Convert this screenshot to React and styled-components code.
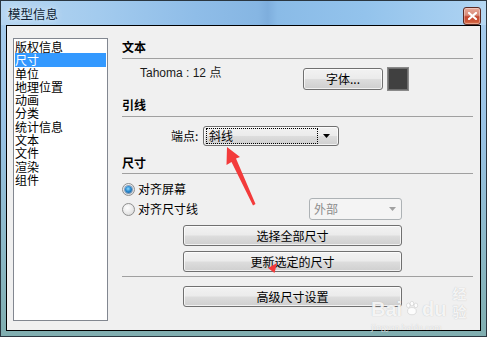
import React from "react";
import styled, { createGlobalStyle, css } from "styled-components";

const Global = createGlobalStyle`
  html, body { margin: 0; padding: 0; }
  body { width: 487px; height: 337px; overflow: hidden; background: #fff; }
  * { box-sizing: border-box; }
`;

const CJK = `"Noto Sans CJK SC", "Noto Sans", sans-serif`;

const Window = styled.div`
  position: relative;
  width: 487px;
  height: 337px;
  border: 1px solid #2a3640;
  display: flex;
  flex-direction: column;
  background: linear-gradient(180deg, #a9cdee 0%, #98c2e4 40%, #8bb8c6 75%, #80aeb0 100%);
  font-family: ${CJK};
  font-size: 12px;
  color: #000;
`;

const TitleBar = styled.div`
  height: 24px;
  flex: none;
  display: flex;
  align-items: center;
  justify-content: space-between;
  padding: 0 5px 0 7px;
  background: linear-gradient(90deg, #b5d5f1 0%, #a3cbee 20%, #8fbde8 40%, #86b6e3 53%, #7eaedd 55%, #8abbe7 57%, #93c3ec 75%, #a9d0f1 95%, #b7d8f2 100%);
`;

const Title = styled.span`
  font-size: 12.5px;
  line-height: 14px;
  color: #0f1e33;
  text-shadow: 0 0 6px rgba(255, 255, 255, 0.9);
  margin-top: 1px;
`;

const CloseButton = styled.div`
  width: 18px;
  height: 18px;
  margin-top: 5px;
  border: 1px solid #5b2a24;
  border-radius: 3px;
  background: linear-gradient(180deg, #e9a999 0%, #d88b79 45%, #c4452f 55%, #cd5a3a 85%, #e07b55 100%);
  display: flex;
  align-items: center;
  justify-content: center;
  box-shadow: inset 0 0 0 1px rgba(255, 255, 255, 0.35);
`;

const Client = styled.div`
  flex: 1;
  margin: 0 5px 5px 5px;
  border: 1px solid #000;
  background: #f0f0f0;
  display: flex;
  align-items: flex-start;
  padding: 12px 7px 0 6px;
  gap: 14px;
`;

const ListBox = styled.div`
  width: 95px;
  height: 283px;
  flex: none;
  background: #fff;
  border: 1px solid #828790;
  padding: 1px 1px 0 1px;
`;

const ListItem = styled.div`
  height: 13.3px;
  line-height: 13.3px;
  padding-left: 0;
  white-space: nowrap;
  ${(p) =>
    p.$selected &&
    css`
      background: #3399ff;
      color: #fff;
    `}
`;

const Panel = styled.div`
  flex: 1;
  display: flex;
  flex-direction: column;
`;

const Heading = styled.div`
  font-weight: bold;
  line-height: 14px;
  height: 14px;
  margin-top: ${(p) => p.$mt}px;
`;

const Rule = styled.div`
  height: 1px;
  background: #a0a0a0;
  margin-top: ${(p) => p.$mt}px;
`;

const Row = styled.div`
  display: flex;
  align-items: center;
  margin-top: ${(p) => p.$mt}px;
  padding-left: ${(p) => p.$pl || 0}px;
  height: ${(p) => p.$h}px;
`;

const FontLabel = styled.span`
  font-family: "Liberation Sans", ${CJK};
  font-size: 12px;
  line-height: 14px;
  width: 163px;
  align-self: flex-start;
  margin-top: -1px;
  color: #1a1a1a;
`;

const buttonSkin = css`
  border: 1px solid #707070;
  border-radius: 3px;
  background: linear-gradient(180deg, #f2f2f2 0%, #ebebeb 48%, #dddddd 52%, #cfcfcf 100%);
  box-shadow: inset 0 0 0 1px rgba(255, 255, 255, 0.7);
`;

const Button = styled.div`
  ${buttonSkin};
  width: ${(p) => p.$w}px;
  height: ${(p) => p.$h || 21}px;
  margin-left: ${(p) => p.$ml || 0}px;
  margin-top: ${(p) => p.$mt || 0}px;
  display: flex;
  align-items: center;
  justify-content: center;
  line-height: 14px;
  flex: none;
`;

const Swatch = styled.div`
  width: 22px;
  height: 24px;
  margin-left: 4px;
  border: 1px solid #8a8a8a;
  background: #404040;
  box-shadow: inset 0 0 0 1px #6e6e6e;
`;

const Label = styled.span`
  width: ${(p) => p.$w}px;
  line-height: 14px;
`;

const Combo = styled.div`
  ${buttonSkin};
  width: 136px;
  height: 20px;
  display: flex;
  align-items: center;
  padding: 0 3px 0 2px;
`;

const FocusBox = styled.div`
  width: 112px;
  height: 16px;
  border: 1px dotted #000;
  line-height: 14px;
  padding-left: 2px;
`;

const ArrowCell = styled.div`
  flex: 1;
  display: flex;
  justify-content: center;
  align-items: center;
`;

const DisabledCombo = styled.div`
  width: 93px;
  height: 22px;
  margin-left: auto;
  margin-right: 71px;
  border: 1px solid #adb2b5;
  border-radius: 3px;
  background: #f4f4f4;
  color: #8d8d8d;
  display: flex;
  align-items: center;
  justify-content: space-between;
  padding: 0 5px 0 4px;
  line-height: 14px;
`;

const Radio = styled.span`
  width: 13px;
  height: 13px;
  border-radius: 50%;
  border: 1px solid #8e8f8f;
  background: radial-gradient(circle at 40% 35%, #ffffff 0%, #e6e6e6 60%, #cfcfcf 100%);
  display: inline-flex;
  align-items: center;
  justify-content: center;
  flex: none;
  &::after {
    content: "";
    display: ${(p) => (p.$checked ? "block" : "none")};
    width: 7px;
    height: 7px;
    border-radius: 50%;
    background: radial-gradient(circle at 45% 40%, #8fdcff 0%, #2a8ad0 45%, #0f4f86 100%);
    box-shadow: 0 0 0 1px rgba(30, 80, 140, 0.5);
  }
`;

const RadioText = styled.span`
  margin-left: 3px;
  line-height: 14px;
`;

const Overlay = styled.svg`
  position: absolute;
  left: -1px;
  top: -1px;
  pointer-events: none;
`;

const Watermark = styled.div`
  position: absolute;
  left: 370px;
  top: 283px;
  width: 100px;
  pointer-events: none;
  color: rgba(255, 255, 255, 0.85);
  text-shadow: 0 0 1px rgba(150, 150, 150, 0.6);
  display: flex;
  flex-direction: column;
  align-items: flex-start;
`;

const WmMain = styled.div`
  display: flex;
  align-items: flex-end;
  font-family: "Liberation Sans", sans-serif;
  font-weight: bold;
  font-size: 20px;
  line-height: 22px;
  gap: 2px;
`;

const WmCn = styled.span`
  font-family: ${CJK};
  font-size: 14px;
  line-height: 18px;
  font-weight: bold;
  margin-left: 4px;
`;

const WmSub = styled.div`
  font-family: "Liberation Serif", serif;
  font-size: 9px;
  line-height: 11px;
  margin-top: 2px;
  letter-spacing: 0.2px;
`;

const items = ["版权信息", "尺寸", "单位", "地理位置", "动画", "分类", "统计信息", "文本", "文件", "渲染", "组件"];

export default function App() {
  return (
    <>
      <Global />
      <Window>
        <TitleBar>
          <Title>模型信息</Title>
          <CloseButton>
            <svg width="9" height="8" viewBox="0 0 9 8">
              <path d="M1 1 L8 7 M8 1 L1 7" stroke="#fff" strokeWidth="2.2" strokeLinecap="square" />
            </svg>
          </CloseButton>
        </TitleBar>
        <Client>
          <ListBox>
            {items.map((t, i) => (
              <ListItem key={t} $selected={i === 1}>
                {t}
              </ListItem>
            ))}
          </ListBox>
          <Panel>
            <Heading $mt={2}>文本</Heading>
            <Rule $mt={4} />
            <Row $mt={8} $pl={18} $h={24}>
              <FontLabel>Tahoma : 12 点</FontLabel>
              <Button $w={80} $h={22}>字体...</Button>
              <Swatch />
            </Row>
            <Heading $mt={7}>引线</Heading>
            <Rule $mt={4} />
            <Row $mt={9} $pl={49} $h={20}>
              <Label $w={32}>端点:</Label>
              <Combo>
                <FocusBox>斜线</FocusBox>
                <ArrowCell>
                  <svg width="7" height="4" viewBox="0 0 7 4">
                    <path d="M0 0 H7 L3.5 4 Z" fill="#000" />
                  </svg>
                </ArrowCell>
              </Combo>
            </Row>
            <Heading $mt={10}>尺寸</Heading>
            <Rule $mt={3} />
            <Row $mt={8} $h={14}>
              <Radio $checked />
              <RadioText>对齐屏幕</RadioText>
            </Row>
            <Row $mt={2} $h={22}>
              <Radio />
              <RadioText>对齐尺寸线</RadioText>
              <DisabledCombo>
                <span>外部</span>
                <svg width="7" height="4" viewBox="0 0 7 4">
                  <path d="M0 0 H7 L3.5 4 Z" fill="#a0a0a0" />
                </svg>
              </DisabledCombo>
            </Row>
            <Button $w={219} $ml={61} $mt={5}>选择全部尺寸</Button>
            <Button $w={219} $ml={61} $mt={5}>更新选定的尺寸</Button>
            <Rule $mt={4} />
            <Button $w={219} $ml={61} $mt={9}>高级尺寸设置</Button>
          </Panel>
        </Client>
        <Watermark>
          <WmMain>
            <span>Bai</span>
            <svg width="22" height="22" viewBox="0 0 22 22">
              <g fill="rgba(255,255,255,0.85)" stroke="rgba(160,160,160,0.5)" strokeWidth="0.8">
                <ellipse cx="6" cy="6" rx="2.5" ry="3.2" />
                <ellipse cx="11" cy="3.5" rx="2.5" ry="3.2" />
                <ellipse cx="16.5" cy="6" rx="2.5" ry="3.2" />
                <ellipse cx="11" cy="14" rx="6" ry="5" />
              </g>
            </svg>
            <span>du</span>
            <WmCn>经验</WmCn>
          </WmMain>
          <WmSub>jingyan.baidu.com</WmSub>
        </Watermark>
        <Overlay width="487" height="337" viewBox="0 0 487 337">
          <polygon points="227,147 240,157 236,158.5 255.5,204 253,205.5 231.5,162 226.5,165" fill="#f33b3b" />
          <polygon points="268,268 277,263 274.5,273" fill="#f33b3b" />
        </Overlay>
      </Window>
    </>
  );
}
